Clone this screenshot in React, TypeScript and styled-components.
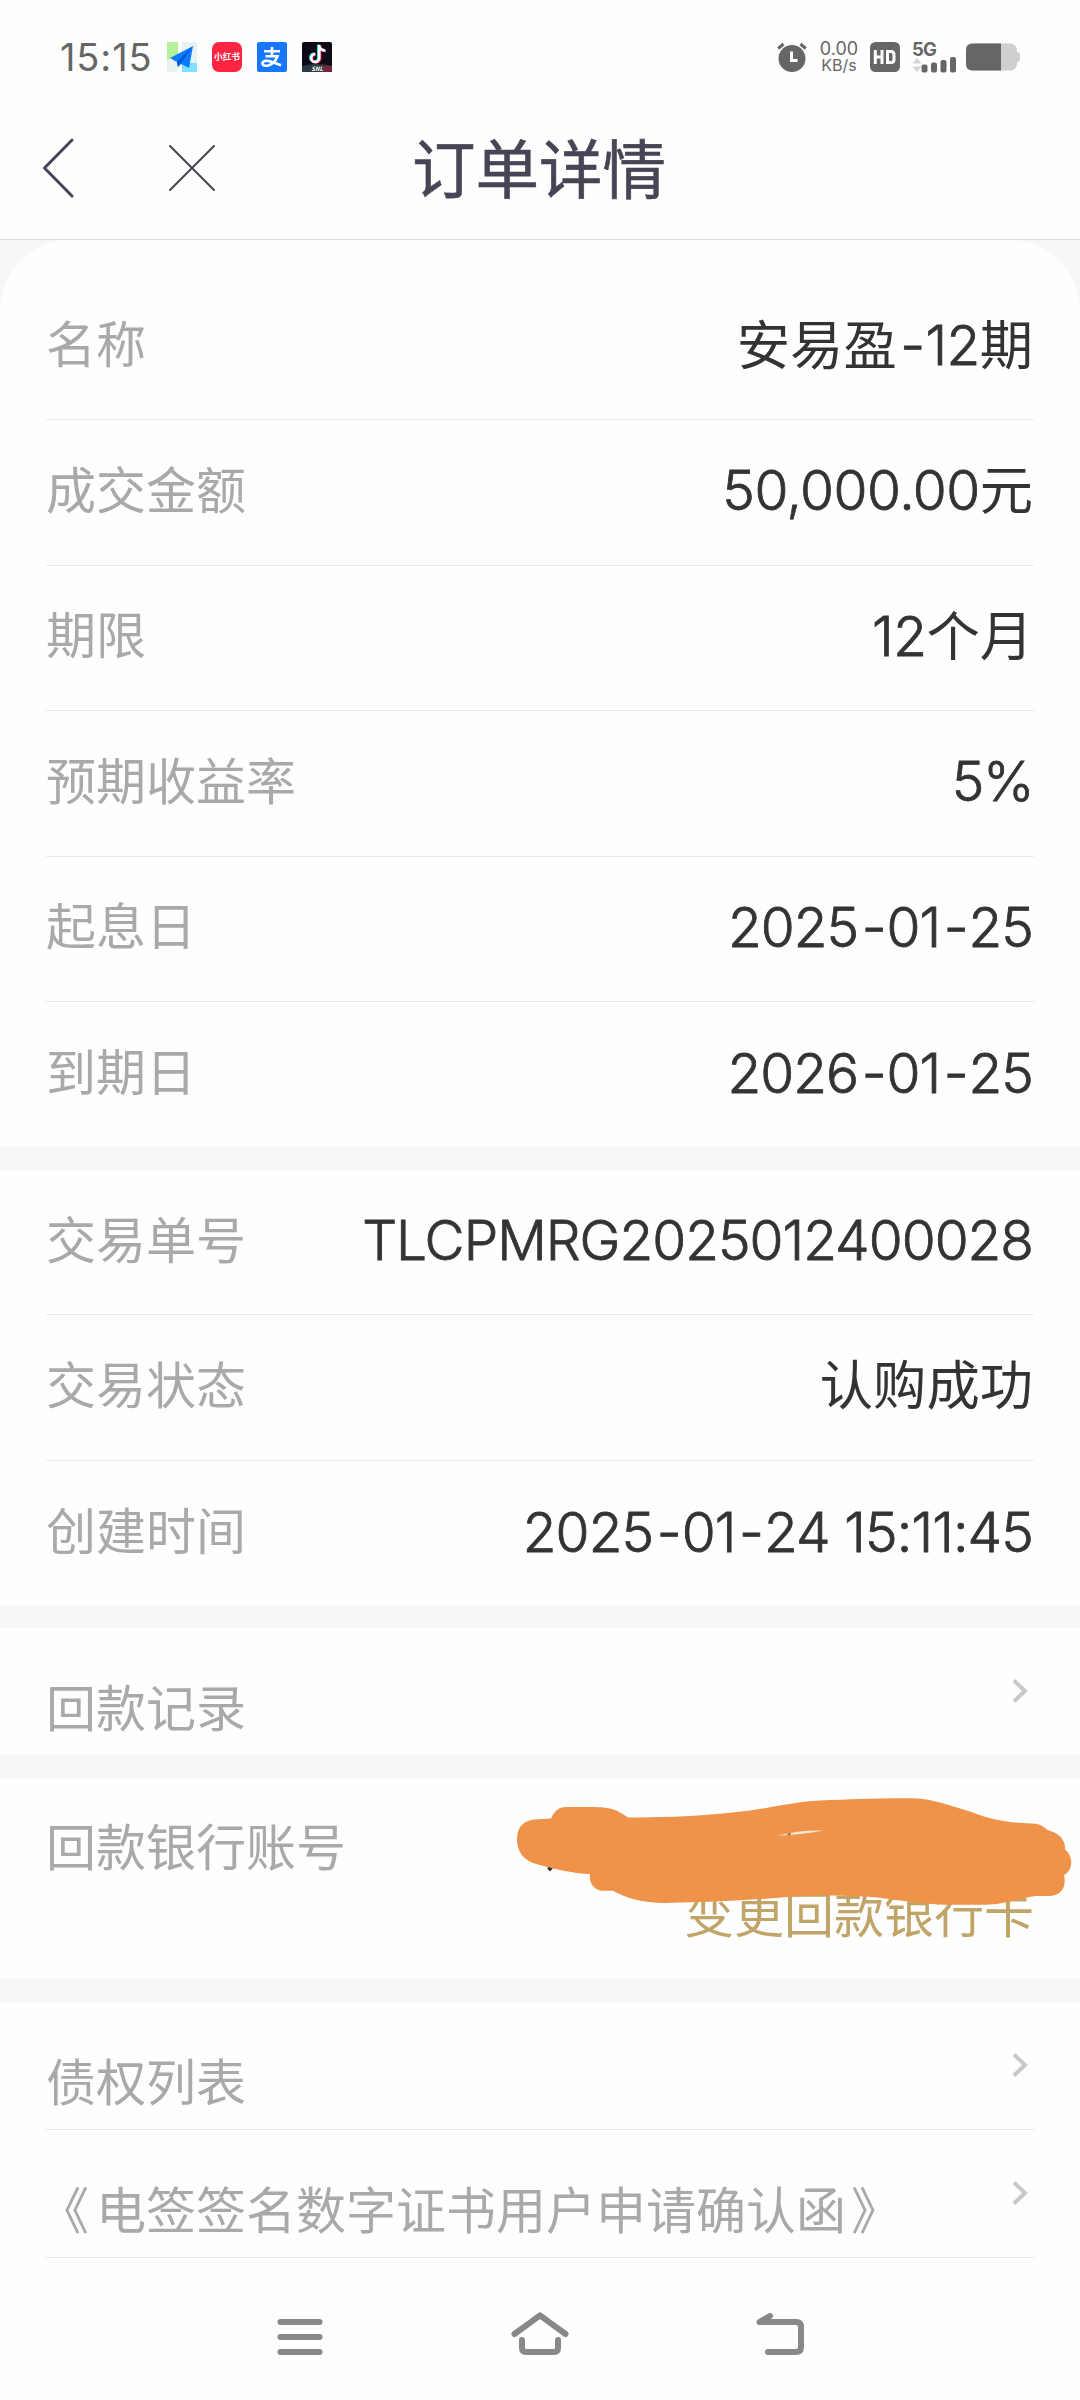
import React from "react";
import styled, { createGlobalStyle } from "styled-components";

const Global = createGlobalStyle`
  * { box-sizing: border-box; }
  body {
    margin: 0;
    background: #fefefe;
    font-family: Inter, "Noto Sans CJK SC", sans-serif;
  }
`;

const Screen = styled.div`
  width: 1080px;
  height: 2400px;
  display: flex;
  flex-direction: column;
  background: #fefefe;
  overflow: hidden;
`;

const StatusBar = styled.div`
  height: 100px;
  padding: 14px 60px 0 60px;
  display: flex;
  align-items: center;
  justify-content: space-between;
  color: #666;
`;

const StatusGroup = styled.div<{ $gap: number }>`
  display: flex;
  align-items: center;
  gap: ${(p) => p.$gap}px;
`;

const Clock = styled.span`
  width: 92px;
  font-size: 38px;
  line-height: 40px;
  letter-spacing: 0.9px;
  white-space: nowrap;
`;

const NetSpeed = styled.div`
  width: 38px;
  margin-left: 1px;
  display: flex;
  flex-direction: column;
  align-items: center;
  font-size: 18px;
  line-height: 16px;
  white-space: nowrap;
`;

const SpeedUnit = styled.span`
  font-size: 16px;
`;

const NavBar = styled.header`
  height: 140px;
  padding: 0 0 4px 42px;
  display: grid;
  grid-template-columns: 126px 244px 1fr;
  align-items: center;
  border-bottom: 1px solid #dedede;
`;

const Title = styled.h1`
  margin: 5px 0 0;
  font-size: 63.5px;
  line-height: 80px;
  font-weight: 400;
  -webkit-text-stroke: 0.6px #464555;
  color: #464555;
`;

const Content = styled.main`
  flex: 1;
  display: flex;
  flex-direction: column;
  gap: 23px;
  background: #f7f7f7;
`;

const Section = styled.section<{ $first?: boolean; $height: number }>`
  height: ${(p) => p.$height}px;
  padding: ${(p) => (p.$first ? "34.5px" : "0")} 46px 0;
  border-radius: ${(p) => (p.$first ? "69px 69px 0 0" : "0")};
  background: #fefefe;
`;

const Row = styled.div<{ $height: number; $last?: boolean }>`
  height: ${(p) => p.$height}px;
  display: flex;
  align-items: center;
  justify-content: space-between;
  border-bottom: ${(p) => (p.$last ? "0" : "1px solid #e9e9e9")};
`;

const Label = styled.span<{ $drop?: number; $lift?: number }>`
  padding-top: ${(p) => p.$drop ?? 0}px;
  padding-bottom: ${(p) => p.$lift ?? 0}px;
  font-size: 50px;
  line-height: 72px;
  color: #a9a9a9;
  white-space: nowrap;
`;

const Bracket = styled.span<{ $shift: number }>`
  margin-left: ${(p) => p.$shift}px;
  margin-right: ${(p) => -p.$shift}px;
`;

const Value = styled.span`
  padding-bottom: 3px;
  margin-right: 1px;
  font-size: 53.3px;
  line-height: 72px;
  color: #333;
  white-space: nowrap;
`;

const Latin = styled.span<{ $spacing: number }>`
  font-size: 55px;
  font-weight: 300;
  -webkit-text-stroke: 0.8px #333;
  letter-spacing: ${(p) => p.$spacing}px;
`;

const Dash = styled.span`
  padding: 0 1px 0 3.5px;
`;

const AccountRow = styled.div`
  position: relative;
  padding-top: 34px;
  display: flex;
  justify-content: space-between;
`;

const ChangeCard = styled.a`
  padding-top: 67px;
  font-size: 50px;
  line-height: 72px;
  color: #c0a468;
  white-space: nowrap;
`;

const Scribble = styled.svg`
  position: absolute;
  left: 470px;
  top: 12px;
`;

const Arrow = styled.svg`
  margin: 0 6px 2px 0;
`;

const SystemBar = styled.nav`
  height: 142px;
  display: flex;
  justify-content: center;
  gap: 180px;
  padding-top: 45px;
  background: #fefefe;
`;

const Chevron = () => (
  <Arrow width="17" height="26" viewBox="0 0 17 26" fill="none" stroke="#c8c8c8" strokeWidth="4">
    <path d="M3 2.5 14 13 3 23.5" />
  </Arrow>
);

type Part = string | { latin: string; spacing: number };

const withDashes = (text: string) =>
  text.split(/(-)/).map((piece, i) => (piece === "-" ? <Dash key={i}>-</Dash> : piece));

const DetailRow = ({ label, parts, height, last }: { label: string; parts: Part[]; height: number; last?: boolean }) => (
  <Row $height={height} $last={last}>
    <Label $lift={3}>{label}</Label>
    <Value>
      {parts.map((p, i) =>
        typeof p === "string" ? p : <Latin key={i} $spacing={p.spacing}>{withDashes(p.latin)}</Latin>
      )}
    </Value>
  </Row>
);

const product: [string, Part[]][] = [
  ["名称", ["安易盈", { latin: "-12", spacing: -0.6 }, "期"]],
  ["成交金额", [{ latin: "50,000.00", spacing: -0.5 }, "元"]],
  ["期限", [{ latin: "12", spacing: -0.5 }, "个月"]],
  ["预期收益率", [{ latin: "5%", spacing: -1.5 }]],
  ["起息日", [{ latin: "2025-01-25", spacing: -1 }]],
  ["到期日", [{ latin: "2026-01-25", spacing: -1 }]],
];

const trade: [string, Part[]][] = [
  ["交易单号", [{ latin: "TLCPMRG2025012400028", spacing: -1 }]],
  ["交易状态", ["认购成功"]],
  ["创建时间", [{ latin: "2025-01-24 15:11:45", spacing: -0.9 }]],
];

const MapIcon = () => (
  <svg width="30" height="30" viewBox="0 0 30 30">
    <path fill="#e9f1f1" d="M0 0h30v30H0z" />
    <path fill="#b5f09a" d="M0 0h11v13L0 18z" />
    <path fill="#7fe3ff" d="M15 21h15v9H15z" />
    <path fill="#fff" d="M11 0h4v11h-4zM11 22h4v8h-4z" />
    <path fill="#0b7bff" d="M26 4 3 16l7 4 1 5 3-3 8 4z" />
    <path fill="#0557d6" d="m26 4-16 16 1 5 3-4z" />
  </svg>
);

const IconText = styled.text`
  font-family: "Noto Sans CJK SC", sans-serif;
  font-weight: 700;
  fill: #fff;
  text-anchor: middle;
`;

const RedIcon = () => (
  <svg width="30" height="30" viewBox="0 0 30 30">
    <rect width="30" height="30" rx="7" fill="#fe2442" />
    <IconText x="15" y="18.3" fontSize="8.6">小红书</IconText>
  </svg>
);

const PayIcon = () => (
  <svg width="30" height="30" viewBox="0 0 30 30">
    <rect width="30" height="30" rx="2" fill="#1677ff" />
    <g fill="none" stroke="#fff" strokeWidth="2.6">
      <path d="M7 9.3h16M15 5v9M8.500 14.200h12c-1.500 4-5 8-9 9.200-4 1.200-6.500-.5-6-2.500.6-2.200 4-2.700 7.500-1.600l11 4" />
    </g>
  </svg>
);

const NoteIcon = () => (
  <svg width="30" height="30" viewBox="0 0 30 30">
    <rect width="30" height="30" rx="2" fill="#0d0b16" />
    <path d="M0 24q15-4 30 0v6H0z" fill="#2a3a40" />
    <path d="M20 24q6-1 10 0v6H20z" fill="#70283c" />
    <g fill="none" strokeWidth="2.6">
      <path stroke="#25f4ee" d="M16.400 2.500v13a4 4 0 1 1-4-4M16.400 3c.5 3 2.500 5 6 5" />
      <path stroke="#fe2c55" d="M18 3.500v13a4 4 0 1 1-4-4M18 4c.5 3 2.500 5 6 5" />
      <path stroke="#fff" d="M17.200 3v13a4 4 0 1 1-4-4M17.200 3.500c.5 3 2.500 5 6 5" />
    </g>
    <IconText x="15" y="29" fontSize="6" fontStyle="italic">SNL</IconText>
  </svg>
);

const AlarmIcon = () => (
  <svg width="30" height="30" viewBox="0 0 30 30" fill="none">
    <circle cx="15" cy="16.500" r="13.500" fill="#666" />
    <path d="M1.200 6.500 6.500 2M28.800 6.500 23.500 2" stroke="#666" strokeWidth="3" />
    <path d="M14.500 9.500v9h6" stroke="#fff" strokeWidth="3" />
  </svg>
);

const HdIcon = () => (
  <svg width="30" height="30" viewBox="0 0 30 30">
    <rect width="30" height="30" rx="5.500" fill="#666" />
    <path d="M5.300 8v14M12 8v14M5.300 15H12M17.500 9.500h3.500q3 0 3 3v5q0 3-3 3h-3.500z" fill="none" stroke="#fff" strokeWidth="3" />
  </svg>
);

const SignalText = styled.text`
  font-family: Inter, sans-serif;
  font-weight: 700;
  font-size: 18.5px;
  letter-spacing: -0.8px;
  fill: #666;
`;

const SignalGraphic = styled.svg`
  margin: -10px -2px 0 0;
`;

const SignalIcon = () => (
  <SignalGraphic width="44" height="41" viewBox="0 -10 44 41">
    <SignalText x="0" y="14">5G</SignalText>
    <path d="M5 16 9.500 21.500H.5zM5 30 .5 24.500h9z" fill="#d6d6d6" />
    <g fill="#666">
      <rect x="9.500" y="22.500" width="6" height="8" rx="2" />
      <rect x="19" y="20.500" width="6" height="10" rx="2" />
      <rect x="28.500" y="18" width="6" height="12.500" rx="2" />
      <rect x="38" y="15" width="6" height="15.500" rx="2" />
    </g>
  </SignalGraphic>
);

const BatteryIcon = () => (
  <svg width="54" height="28" viewBox="0 0 54 28">
    <rect width="51" height="27" y=".5" rx="6.500" fill="#cfcfcf" />
    <rect x="47" y="9" width="7" height="10" rx="3" fill="#cfcfcf" />
    <path d="M35 .5H6.500Q0 .5 0 7v14q0 6.500 6.500 6.500H35z" fill="#666" />
  </svg>
);

export default function App() {
  return (
    <Screen>
      <Global />
      <StatusBar>
        <StatusGroup $gap={15}>
          <Clock>15:15</Clock>
          <MapIcon />
          <RedIcon />
          <PayIcon />
          <NoteIcon />
        </StatusGroup>
        <StatusGroup $gap={12}>
          <AlarmIcon />
          <NetSpeed>
            <span>0.00</span>
            <SpeedUnit>KB/s</SpeedUnit>
          </NetSpeed>
          <HdIcon />
          <SignalIcon />
          <BatteryIcon />
        </StatusGroup>
      </StatusBar>
      <NavBar>
        <svg width="32" height="60" viewBox="0 0 32 60" fill="none" stroke="#464555" strokeWidth="3" strokeLinecap="round" strokeLinejoin="round">
          <path d="M30 2 2.500 30 30 58" />
        </svg>
        <svg width="48" height="48" viewBox="0 0 48 48" fill="none" stroke="#464555" strokeWidth="2" strokeLinecap="round">
          <path d="m2 2 44 44M46 2 2 46" />
        </svg>
        <Title>订单详情</Title>
      </NavBar>
      <Content>
        <Section $first $height={907}>
          {product.map(([label, parts], i) => (
            <DetailRow key={label} label={label} parts={parts} height={145.5} last={i === 5} />
          ))}
        </Section>
        <Section $height={435}>
          {trade.map(([label, parts], i) => (
            <DetailRow key={label} label={label} parts={parts} height={i === 1 ? 146 : 145} last={i === 2} />
          ))}
        </Section>
        <Section $height={127}>
          <Row $height={127} $last>
            <Label $drop={34}>回款记录</Label>
            <Chevron />
          </Row>
        </Section>
        <Section $height={201}>
          <AccountRow>
            <Label>回款银行账号</Label>
            <ChangeCard>变更回款银行卡</ChangeCard>
            <Scribble width="560" height="140" viewBox="516 1794.4 560 160.7" preserveAspectRatio="none">
              <path d="M547 1884l3-2 3 2-3 4z" fill="#2b2b2b" />
              <path
                fill="#ee9349"
                d="M551 1827C555 1817 560 1814 566 1814H592C612 1814 618 1818 628 1826C670 1826 710 1824 750 1818C790 1811 800 1807 830 1806Q890 1803 913 1804C935 1805 947 1812 970 1819C996 1831 1015 1832 1036 1833Q1042 1834 1047 1840Q1066 1846 1065 1863C1073 1869 1074 1886 1064 1892C1067 1907 1060 1916 1050 1916H1036C1020 1918 1005 1926 985 1926H945C920 1926 892 1919 868 1917Q830 1914 790 1917Q730 1923 665 1924C642 1924 625 1918 613 1910H602C594 1909 589 1902 590 1891Q568 1890 538 1880C524 1876 517 1866 517 1851C517 1835 525 1828 539 1828Z"
              />
              <path d="M777 1847Q800 1840 824 1841Q800 1846 777 1847z" fill="#fbe5cf" />
              <path d="m786 1845 5-1-1 2z" fill="#5c3818" />
            </Scribble>
          </AccountRow>
        </Section>
        <Section $height={256}>
          <Row $height={128}>
            <Label $drop={34}>债权列表</Label>
            <Chevron />
          </Row>
          <Row $height={128}>
            <Label $drop={34}>
              <Bracket $shift={-7}>《</Bracket>电签签名数字证书用户申请确认函<Bracket $shift={5}>》</Bracket>
            </Label>
            <Chevron />
          </Row>
        </Section>
      </Content>
      <SystemBar>
        <svg width="60" height="60" viewBox="0 0 60 60" fill="none" stroke="#888" strokeWidth="6" strokeLinecap="round">
          <path d="M10.500 19h39M10.500 34h39M10.500 49h39" />
        </svg>
        <svg width="60" height="60" viewBox="0 0 60 60" fill="none" stroke="#888" strokeWidth="6" strokeLinecap="round" strokeLinejoin="round">
          <path d="M4.500 31 30 12.300 55.500 31M12 37v8q0 4 4 4h28q4 0 4-4v-8" />
        </svg>
        <svg width="60" height="60" viewBox="0 0 60 60" fill="none" stroke="#888" strokeWidth="6" strokeLinecap="round" strokeLinejoin="round">
          <path d="M20 13 9.500 19H46q5 0 5 5v20q0 5-5 5H18" />
        </svg>
      </SystemBar>
    </Screen>
  );
}
